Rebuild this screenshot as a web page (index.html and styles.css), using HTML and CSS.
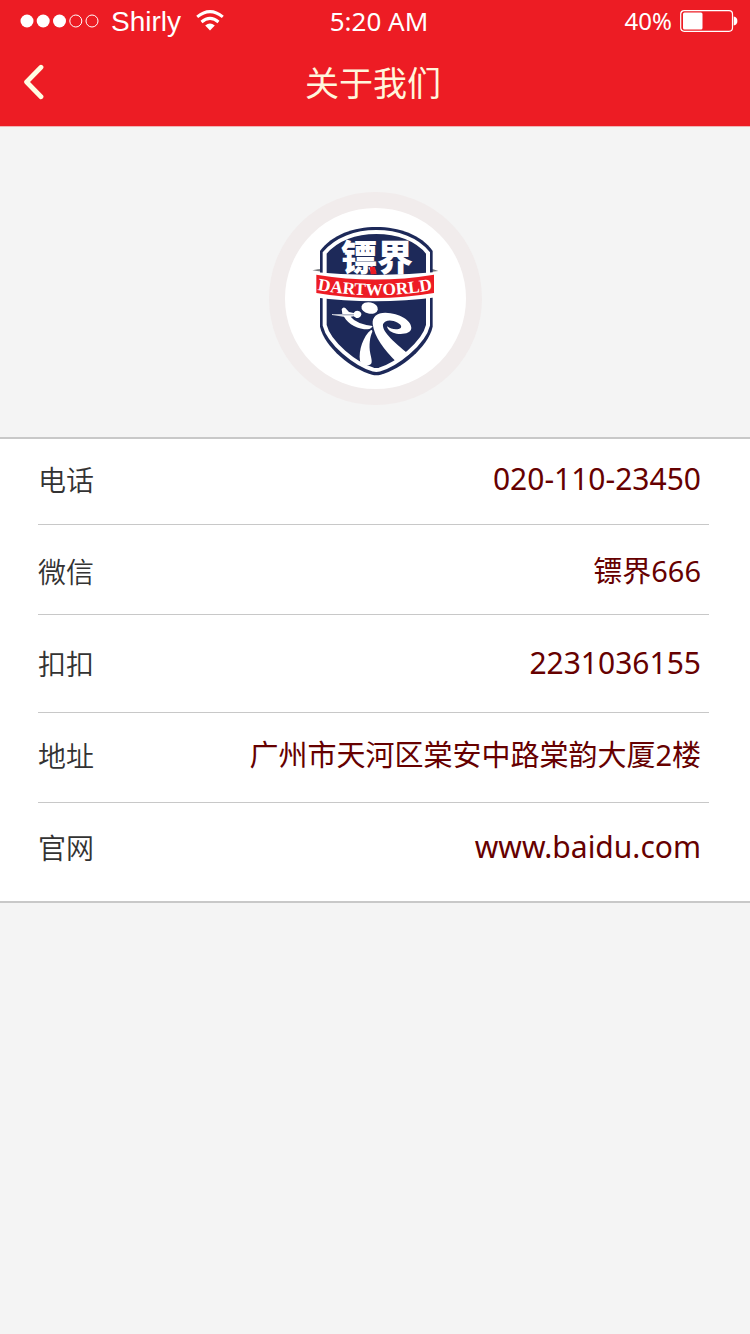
FILE: index.html
```html
<!DOCTYPE html>
<html lang="zh-CN">
<head>
<meta charset="utf-8">
<meta name="viewport" content="width=device-width, initial-scale=1">
<title>关于我们</title>
<link rel="stylesheet" href="styles.css">
</head>
<body>
<header class="header">
  <div class="status">
    <div class="status-left">
      <svg class="signal" width="79" height="14" viewBox="0 0 79 14" aria-hidden="true">
        <g fill="#fff"><circle cx="7" cy="7" r="6.5"/><circle cx="23.2" cy="7" r="6.5"/><circle cx="39.5" cy="7" r="6.5"/></g>
        <g fill="none" stroke="#fff"><circle cx="55.8" cy="7" r="6"/><circle cx="72" cy="7" r="6"/></g>
      </svg>
      <span class="carrier">Shirly</span>
      <svg class="wifi" width="28" height="22" viewBox="0 0 28 22" aria-hidden="true">
        <path d="M14 20.5 9.2 15.600Q14 11.200 18.8 15.600Z" fill="#fff"/>
        <path d="M5.500 12Q14 4.800 22.500 12M1.2 6.900Q14-3.600 26.8 6.900" fill="none" stroke="#fff" stroke-width="3"/>
      </svg>
    </div>
    <time class="clock">5:20 AM</time>
    <div class="status-right">
      <span class="charge">40%</span>
      <svg width="58" height="22" viewBox="0 0 58 22" aria-hidden="true">
        <rect x=".7" y=".7" width="51.8" height="20.6" rx="3.5" fill="none" stroke="#fff" stroke-width="1.2"/>
        <rect x="3" y="2.5" width="19.5" height="17" rx="1.5" fill="#fff"/>
        <path d="M53.7 6.5Q57.4 7.4 57.4 11T53.7 15.5Z" fill="#fff"/>
      </svg>
    </div>
  </div>
  <nav class="navbar">
    <button class="back" type="button" aria-label="返回">
      <svg width="24" height="36" viewBox="0 0 24 36" aria-hidden="true"><path d="M19 3.3 4.6 18 19 32.700" fill="none" stroke="#fffde2" stroke-width="4.8" stroke-linecap="round" stroke-linejoin="round"/></svg>
    </button>
    <h1 class="title">关于我们</h1>
  </nav>
</header>
<main>
  <section class="brand">
    <div class="badge">
      <svg class="logo" viewBox="75 69 543 543" role="img" aria-label="镖界 DARTWORLD">
        <defs><path id="ribbon-line" d="M169 314Q345 347 521 314"/></defs>
        <path d="M157 256Q180 249 205 252V263ZM535 258Q515 249 492 252V263Z" fill="#77797d"/>
        <path d="M180 198C216 149 282 126 349 126S484 149 518 198V425C504 487 422 553 362 569Q349 572 336 569C276 553 194 487 180 425Z" fill="#1d2959"/>
        <path d="M194 204C229 162 287 141 349 141S471 162 504 204V421C491 475 411 538 358 554Q349 556 340 554C287 538 207 475 194 421Z" fill="none" stroke="#fff" stroke-width="12"/>
        <text class="logo-name" x="351" y="257" text-anchor="middle">镖界</text>
        <path d="M160 261Q345 279 530 261V337Q345 361 160 337Z" fill="#fff"/>
        <path d="M329 245H345L350 268H332Z" fill="#ed1c24"/>
        <path d="M169 269Q345 298 522 269V324Q345 354 169 324Z" fill="#ed1c24"/>
        <text class="logo-latin" text-anchor="middle"><textPath href="#ribbon-line" startOffset="50%">DARTWORLD</textPath></text>
        <g transform="translate(135 330)" fill="#fff">
          <ellipse cx="194" cy="39" rx="25" ry="17" transform="rotate(12 194 39)"/>
          <path d="M81 57 112 57 110 43Q114 35 121 39L132 51 146 54Q151 46 160 48Q170 51 169 59Q166 69 154 69L146 64 137 65Q153 86 203 93Q199 102 188 103C160 103 130 89 117 65L81 60Z"/>
          <path d="M82 59.500H147" fill="none" stroke="#1d2959" stroke-width="1.5"/>
          <path d="M198 105C175 123 160 166 165 198C168 211 183 213 195 209C204 205 199 190 196 176C191 150 195 125 202 110Q203 104 198 105Z"/>
          <path d="M275 202C237 163 208 126 203 87C201 66 215 53 241 53C284 54 319 76 319 99C318 114 297 119 275 116C261 114 248 106 246 94C256 102 270 104 281 102C292 99 291 90 278 83C259 73 239 75 234 88C231 107 258 136 312 178Z"/>
        </g>
      </svg>
    </div>
  </section>
  <dl class="contacts">
    <div class="row"><dt>电话</dt><dd class="latin">020-110-23450</dd></div>
    <div class="row"><dt>微信</dt><dd>镖界666</dd></div>
    <div class="row"><dt>扣扣</dt><dd class="latin">2231036155</dd></div>
    <div class="row"><dt>地址</dt><dd>广州市天河区棠安中路棠韵大厦2楼</dd></div>
    <div class="row"><dt>官网</dt><dd class="latin"><a href="http://www.baidu.com">www.baidu.com</a></dd></div>
  </dl>
</main>
</body>
</html>
```

FILE: styles.css
```css
* {
  box-sizing: border-box;
}

body {
  margin: 0;
  min-height: 100vh;
  background: #f4f4f4;
  color: #333;
  font-family: "Noto Sans", "Noto Sans CJK SC", sans-serif;
}

.header {
  background: #ed1c24;
  border-bottom: 1px solid #f0b4b6;
  color: #fff;
}

.status {
  display: grid;
  grid-template-columns: 1fr auto 1fr;
  align-items: center;
  height: 40px;
  padding: 0 12px 0 20px;
}

.status-left,
.status-right {
  display: flex;
  align-items: center;
}

.status-right {
  justify-content: flex-end;
  gap: 8px;
}

.carrier {
  margin: 2px 15px 0 12px;
  font: 28px/40px "Liberation Sans", sans-serif;
}

.clock {
  font-size: 26px;
  line-height: 40px;
}

.charge {
  font-size: 24px;
  line-height: 40px;
}

.navbar {
  display: grid;
  grid-template-columns: 48px 1fr 48px;
  align-items: center;
  height: 86px;
  padding: 0 24px 2px 20px;
}

.back {
  display: flex;
  padding: 0 0 0 2px;
  border: 0;
  background: none;
}

.title {
  margin: 0;
  color: #fff6dc;
  font-family: "Noto Sans CJK SC", sans-serif;
  font-size: 34px;
  font-weight: 400;
  line-height: 48px;
  text-align: center;
}

.brand {
  display: flex;
  justify-content: center;
  padding: 65px 0 32px;
}

.badge {
  display: flex;
  width: 213px;
  border: 16px solid #f1ecec;
  border-radius: 50%;
  background: #fff;
}

.logo {
  width: 100%;
}

.logo-name {
  fill: #fff;
  font-family: "Noto Sans CJK SC", sans-serif;
  font-size: 108px;
  font-weight: 900;
}

.logo-latin {
  fill: #fff;
  font-family: "Liberation Serif", serif;
  font-size: 52px;
  font-weight: 700;
}

.contacts {
  margin: 0;
  padding: 0 41px 0 38px;
  border-top: 2px solid #c8c8c8;
  border-bottom: 2px solid #c8c8c8;
  background: #fff;
}

.row {
  display: flex;
  justify-content: space-between;
  padding: 20px 8px 25px 0;
  border-bottom: 1px solid #c8c8c8;
  line-height: 44px;
}

.row:nth-child(1) {
  padding-top: 18px;
  padding-bottom: 23px;
}

.row:nth-child(2) {
  padding-top: 24px;
  padding-bottom: 21px;
}

.row:nth-child(3) {
  padding-top: 26px;
  padding-bottom: 27px;
}

.row:last-child {
  padding-top: 22px;
  padding-bottom: 32px;
  border-bottom: 0;
}

.row dt {
  font-family: "Noto Sans CJK SC", sans-serif;
  font-size: 28px;
  font-weight: 350;
}

.row dd {
  margin: 0;
  color: #600;
  font-size: 29px;
  text-align: right;
}

.row .latin {
  font-size: 30px;
}

.row a {
  color: inherit;
  text-decoration: none;
}
```
